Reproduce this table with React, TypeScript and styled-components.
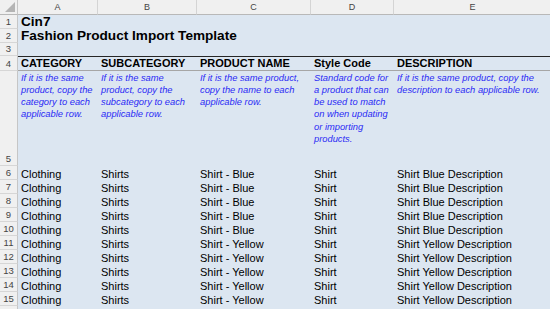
import styled, { createGlobalStyle } from "styled-components";

const GlobalStyle = createGlobalStyle`
  html, body {
    margin: 0;
    padding: 0;
    background: #ffffff;
    overflow: hidden;
  }
  body {
    font-family: "Liberation Sans", Arial, sans-serif;
  }
`;

const COLS = ["A", "B", "C", "D", "E"];

interface IRow {
  category: string;
  subcategory: string;
  name: string;
  style: string;
  description: string;
}

const rows: IRow[] = [
  ...Array(5).fill({
    category: "Clothing",
    subcategory: "Shirts",
    name: "Shirt - Blue",
    style: "Shirt",
    description: "Shirt Blue Description",
  }),
  ...Array(5).fill({
    category: "Clothing",
    subcategory: "Shirts",
    name: "Shirt - Yellow",
    style: "Shirt",
    description: "Shirt Yellow Description",
  }),
];

const headers = ["CATEGORY", "SUBCATEGORY", "PRODUCT NAME", "Style Code", "DESCRIPTION"];

const notes = [
  "If it is the same product, copy the category to each applicable row.",
  "If it is the same product, copy the subcategory to each applicable row.",
  "If it is the same product, copy the name to each applicable row.",
  "Standard code for a product that can be used to match on when updating or importing products.",
  "If it is the same product, copy the description to each applicable row.",
];

const Sheet = styled.div`
  display: grid;
  grid-template-columns: 18px 80px 99px 114px 83px 158px;
  grid-template-rows: 15px 14px 14px 13px 15px 95px repeat(11, 14px);
  width: 552px;
  height: 309px;
  overflow: hidden;
`;

const Corner = styled.div`
  box-sizing: border-box;
  background: #f0f0f0;
  border-right: 1px solid #c6c6c6;
  border-bottom: 1px solid #b8b8b8;
  display: flex;
  align-items: flex-end;
  justify-content: flex-end;
  padding: 0 2px 2px 0;
`;

const ColHead = styled.div`
  box-sizing: border-box;
  background: #f0f0f0;
  border-right: 1px solid #d4d4d4;
  border-bottom: 1px solid #b8b8b8;
  color: #444444;
  font-size: 9px;
  line-height: 14px;
  text-align: center;
`;

const RowHead = styled.div`
  box-sizing: border-box;
  background: #f0f0f0;
  border-right: 1px solid #c6c6c6;
  border-bottom: 1px solid #d6d6d6;
  color: #444444;
  font-size: 9.5px;
  line-height: 10px;
  display: flex;
  align-items: flex-end;
  justify-content: center;
  padding-bottom: 1px;
`;

const TitleCell = styled.div`
  grid-column: 2 / -1;
  background: #dce6f1;
  font-size: 13.6px;
  font-weight: 700;
  line-height: 14px;
  color: #000000;
  padding-left: 3px;
  white-space: nowrap;
  display: flex;
  align-items: flex-end;
`;

const HeadCell = styled.div`
  box-sizing: border-box;
  background: #dce6f1;
  border-top: 1px solid #262626;
  border-bottom: 1px solid #a6a6a6;
  font-size: 11px;
  font-weight: 700;
  line-height: 11px;
  color: #000000;
  padding: 0 2px 1px 3px;
  white-space: nowrap;
  display: flex;
  align-items: flex-end;
`;

const NoteCell = styled.div`
  background: #dce6f1;
  font-size: 9.33px;
  font-style: italic;
  line-height: 12.3px;
  color: #2a2af5;
  padding: 0.5px 3px 0 3px;
`;

const DataCell = styled.div`
  background: #dce6f1;
  font-size: 11px;
  line-height: 11px;
  color: #000000;
  padding: 0 2px 0 3px;
  white-space: nowrap;
  overflow: hidden;
  display: flex;
  align-items: flex-end;
`;

const App = () => {
  return (
    <>
      <GlobalStyle />
      <Sheet>
        <Corner>
          <svg width="10" height="10" viewBox="0 0 10 10">
            <polygon points="10,0 10,10 0,10" fill="#b4b4b4" />
          </svg>
        </Corner>
        {COLS.map((c) => (
          <ColHead key={c}>{c}</ColHead>
        ))}

        <RowHead>1</RowHead>
        <TitleCell>Cin7</TitleCell>
        <RowHead>2</RowHead>
        <TitleCell>Fashion Product Import Template</TitleCell>
        <RowHead>3</RowHead>
        <TitleCell />

        <RowHead>4</RowHead>
        {headers.map((h) => (
          <HeadCell key={h}>{h}</HeadCell>
        ))}

        <RowHead>5</RowHead>
        {notes.map((n, i) => (
          <NoteCell key={i}>{n}</NoteCell>
        ))}

        {rows.map((r, i) => [
          <RowHead key={`h${i}`}>{i + 6}</RowHead>,
          <DataCell key={`a${i}`}>{r.category}</DataCell>,
          <DataCell key={`b${i}`}>{r.subcategory}</DataCell>,
          <DataCell key={`c${i}`}>{r.name}</DataCell>,
          <DataCell key={`d${i}`}>{r.style}</DataCell>,
          <DataCell key={`e${i}`}>{r.description}</DataCell>,
        ])}

        {/* row 16, only its top edge is in view */}
        <RowHead />
        {COLS.map((c) => (
          <DataCell key={`16${c}`} />
        ))}
      </Sheet>
    </>
  );
};

export default App;
